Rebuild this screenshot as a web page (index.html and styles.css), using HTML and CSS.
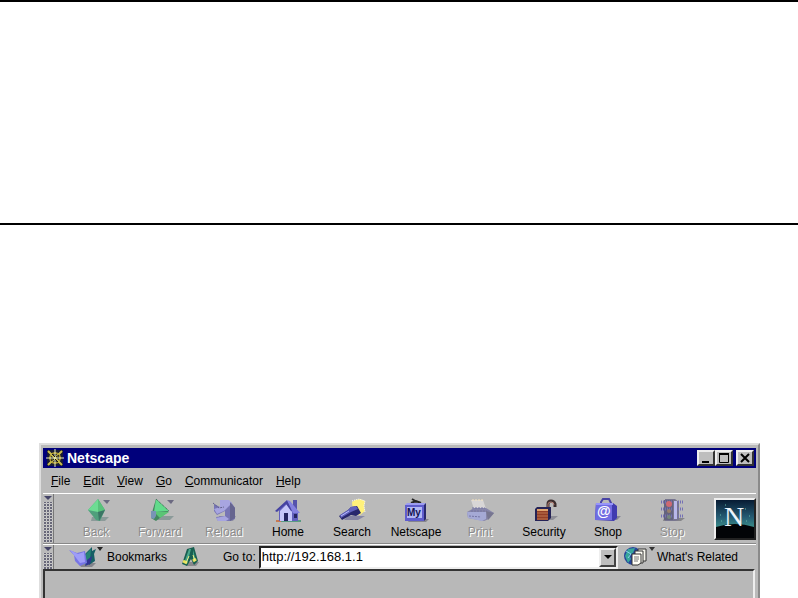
FILE: index.html
```html
<!DOCTYPE html>
<html lang="en">
<head>
    <meta charset="UTF-8">
    <meta name="viewport" content="width=device-width, initial-scale=1.0">
    <title>Netscape</title>
    <link rel="stylesheet" href="styles.css">
</head>
<body>
    <hr>
    <hr class="second">

    <div class="window">
        <div class="titlebar">
            <svg class="app-icon" width="18" height="18" viewBox="0 0 18 18">
                <path d="M1 1h16v16H1z" fill="#171b35"/>
                <circle cx="9" cy="9" r="5" fill="none" stroke="#a3912b" stroke-width="2"/>
                <path d="M2 2l14 14M16 2L2 16" stroke="#c9bd4a" stroke-width="2"/>
                <path d="M9 0v18M0 9h18" stroke="#eef2bd" stroke-width="1"/>
                <path d="M6 5l3 3M12 13l-3-3M5 12l3-2M10 8l3-2" stroke="#111" stroke-width="1"/>
            </svg>
            <span class="title">Netscape</span>
            <div class="controls">
                <button class="ctl" aria-label="Minimize"><svg width="12" height="12"><path d="M2 10h7" stroke="#000" stroke-width="2"/></svg></button>
                <button class="ctl" aria-label="Maximize"><svg width="12" height="12"><path d="M1.500 2v8.500h9V2" fill="none" stroke="#000"/><path d="M1 2h10" stroke="#000" stroke-width="2"/></svg></button>
                <button class="ctl close" aria-label="Close"><svg width="12" height="12"><path d="M2 2l8 8M10 2l-8 8" stroke="#000" stroke-width="2"/></svg></button>
            </div>
        </div>

        <nav class="menu">
            <a href="#"><u>F</u>ile</a>
            <a href="#"><u>E</u>dit</a>
            <a href="#"><u>V</u>iew</a>
            <a href="#"><u>G</u>o</a>
            <a href="#"><u>C</u>ommunicator</a>
            <a href="#"><u>H</u>elp</a>
        </nav>

        <div class="toolbar">
            <div class="grip"></div>
            <div class="tools">
                <button class="tool" disabled>
                    <svg width="36" height="26" viewBox="0 0 36 26">
                        <path d="M14 19h17l-4 4H13z" fill="#8b9a99"/>
                        <path d="M20 1l7 11-5 11-4-1-8-10z" fill="#4f9f7c"/>
                        <path d="M20 1L10 12l10 2z" fill="#6ddc93"/>
                        <path d="M20 1l7 11-7 2z" fill="#58c37b"/>
                        <path d="M20 14l7-2-6 11z" fill="#3b7565"/>
                        <path d="M25 2h7l-3 4z" fill="#6b6981"/>
                    </svg>
                    Back
                </button>
                <button class="tool" disabled>
                    <svg width="36" height="26" viewBox="0 0 36 26">
                        <path d="M18 18h14l-4 4H15z" fill="#8b9a99"/>
                        <path d="M14 1l13 12-13 10-5-3 2-9z" fill="#43875f"/>
                        <path d="M14 1l13 12-15 1z" fill="#62db8b"/>
                        <path d="M12 14h15l-9 6z" fill="#5ac575"/>
                        <path d="M9 13h5v5l-2 3-3-1z" fill="#7894b5"/>
                        <path d="M14 1l13 12" stroke="#3d6352" stroke-dasharray="1 1"/>
                        <path d="M25 2h7l-3 4z" fill="#6b6981"/>
                    </svg>
                    Forward
                </button>
                <button class="tool" disabled>
                    <svg width="36" height="26" viewBox="0 0 36 26">
                        <path d="M13 18h17l-3 5H13z" fill="#9191a0"/>
                        <path d="M8 6l6 3 5-6 6 1 4 6v11l-5 2H12l-2-4 9-1v-5l-8 4-3-4z" fill="#7775b4"/>
                        <path d="M14 2h9l3 3-8 8-7 3-3-5 6-2z" fill="#a7a5e0"/>
                        <path d="M24 4l5 6v10l-5 3z" fill="#66658f"/>
                        <path d="M10 20l9-2 4 3-3 2h-8z" fill="#a7a5e0"/>
                        <path d="M7 5l6 5 5-1" fill="none" stroke="#63618c" stroke-dasharray="2 1"/>
                    </svg>
                    Reload
                </button>
                <button class="tool">
                    <svg width="36" height="26" viewBox="0 0 36 26">
                        <path d="M7 22h24v2H6z" fill="#5a9b83"/>
                        <path d="M6 22h5v2H6z" fill="#c67952"/>
                        <path d="M23 2h4v10h-4z" fill="#5553ac"/>
                        <path d="M9 12l8-8 11 9v10H9z" fill="#6260bd"/>
                        <path d="M10 13l7-7 5 8v9H10z" fill="#c5c6fa"/>
                        <path d="M5 13L17 2l6 10-2 1-5-7-9 8z" fill="#4542a2"/>
                        <path d="M17 2l3 1 10 12h-7z" fill="#8582e0"/>
                        <path d="M14 15h4v8h-4zM24 16h3v4h-3z" fill="#252562"/>
                    </svg>
                    Home
                </button>
                <button class="tool">
                    <svg width="36" height="26" viewBox="0 0 36 26">
                        <path d="M14 18h17l-7 4H10z" fill="#8585a4"/>
                        <path d="M18 4l3-2 5-1 5 2-1 5 1 5-5 4-7-2z" fill="#fff17a"/>
                        <path d="M18 3l3-1 4-1 6 2-1 5 1 6" fill="none" stroke="#fff" stroke-dasharray="1 1"/>
                        <path d="M17 9l6-1 4 7-5 3-5-1-9 5-3-4 9-6z" fill="#27276d"/>
                        <path d="M17 9l5-1 2 3-7 3-10 6-1-3 8-5z" fill="#6062bd"/>
                        <path d="M7 18l8-5" stroke="#babcff"/>
                    </svg>
                    Search
                </button>
                <button class="tool">
                    <svg width="36" height="26" viewBox="0 0 36 26">
                        <path d="M12 21h19l-3 3H10z" fill="#85858e"/>
                        <path d="M13 5l5-2 5 2M14 1l5 3" fill="none" stroke="#252525" stroke-width="2"/>
                        <path d="M7 7l2-2h19l-2 2z" fill="#9c9cf1"/>
                        <path d="M26 7l2-2v16l-2 2z" fill="#29296f"/>
                        <path d="M7 7h19v16H7z" fill="#5f5dcd"/>
                        <path d="M9 9h15v11H9z" fill="#b2b7f4"/>
                        <text x="9" y="18">My</text>
                    </svg>
                    Netscape
                </button>
                <button class="tool" disabled>
                    <svg width="36" height="26" viewBox="0 0 36 26">
                        <path d="M9 2h12l3 9H12z" fill="#d8d6d6"/>
                        <path d="M10 2h12" stroke="#f6e4bd" stroke-dasharray="2 1"/>
                        <path d="M5 14l7-4h12l8 5-5 6-5 2-16-3z" fill="#8786a9"/>
                        <path d="M5 14h19v7l-4 2-14-3z" fill="#a5a9d5"/>
                        <path d="M10 10h13M9 13h16M7 18l12 1" stroke="#7575a4" stroke-dasharray="2 1"/>
                        <path d="M24 13l8 2-6 7z" fill="#777690"/>
                    </svg>
                    Print
                </button>
                <button class="tool">
                    <svg width="36" height="26" viewBox="0 0 36 26">
                        <path d="M18 18h14l-5 4H14z" fill="#8e8e96"/>
                        <path d="M22 12V6q0-3 3-3t4 3v3" fill="none" stroke="#3c2d2d" stroke-width="3"/>
                        <path d="M22 11V6q0-2 3-2t3 3" fill="none" stroke="#b78378" stroke-width="1"/>
                        <path d="M9 11l2-2h14v11l-3 3H9z" fill="#252356"/>
                        <path d="M11 12h11v10H11z" fill="#933e26"/>
                        <path d="M11 15h11M11 18h11M11 21h11" stroke="#bd7650"/>
                        <path d="M11 12h11" stroke="#e0a56f" stroke-width="2"/>
                    </svg>
                    Security
                </button>
                <button class="tool">
                    <svg width="36" height="26" viewBox="0 0 36 26">
                        <path d="M14 18h17l-4 4H13z" fill="#858593"/>
                        <path d="M11 7V4l2-3h6l3 6" fill="none" stroke="#4944a5" stroke-width="2"/>
                        <path d="M6 5h17l4 3v12l-3 3-19-1z" fill="#403bb0"/>
                        <path d="M6 5h16v17H5z" fill="#706ce2"/>
                        <path d="M6 6h17" stroke="#9694fa" stroke-width="2"/>
                        <text class="at" x="7" y="18">@</text>
                    </svg>
                    Shop
                </button>
                <button class="tool" disabled>
                    <svg width="36" height="26" viewBox="0 0 36 26">
                        <path d="M10 20h21l-4 3H9z" fill="#858589"/>
                        <path d="M11 1h10l4 3v18l-4 1H11z" fill="#77758f"/>
                        <path d="M10 2h9v20h-9z" fill="#64637e"/>
                        <path d="M20 3h3v18h-3z" fill="#b9b8ea"/>
                        <path d="M7 4h12M7 11h12M7 18h12M24 4h5M24 11h5M24 18h5" stroke="#7470b5" stroke-width="3" stroke-dasharray="1 1"/>
                        <circle cx="15" cy="6" r="3" fill="#ce6972"/>
                        <circle cx="15" cy="13" r="2" fill="#98806c"/>
                        <circle cx="15" cy="19" r="2" fill="#75877b"/>
                    </svg>
                    Stop
                </button>
            </div>
            <a class="logo" href="#" aria-label="Netscape home">
                <svg width="38" height="38" viewBox="0 0 38 38">
                    <defs>
                        <linearGradient id="sky" x2="0" y2="1">
                            <stop offset="0" stop-color="#071b33"/>
                            <stop offset=".45" stop-color="#255b73"/>
                            <stop offset=".7" stop-color="#398987"/>
                        </linearGradient>
                    </defs>
                    <path d="M0 0h38v38H0z" fill="url(#sky)"/>
                    <path d="M4 15h1M9 5h1M29 9h1M33 16h1M5 21h1M30 21h1" stroke="#63bba9"/>
                    <path d="M0 27q19-6 38 0v11H0z" fill="#020407"/>
                    <text class="n" x="8" y="26">N</text>
                </svg>
            </a>
        </div>

        <div class="location">
            <div class="grip"></div>
            <button class="bookmarks">
                <svg width="36" height="22" viewBox="0 0 36 22">
                    <path d="M10 17h18l-4 4H13z" fill="#84848c"/>
                    <path d="M16 9l8-8v4l4-2-2 5 1 7-6 4z" fill="#155f65"/>
                    <path d="M17 9l6-6-1 11-5 5z" fill="#258475"/>
                    <path d="M19 14l5-4-2 8-5 2z" fill="#303392"/>
                    <path d="M1 4l8 3 8-2 2 12-7 3-5-5-1-6z" fill="#7775e4"/>
                    <path d="M2 4l8 4 6-2 1 10-5 1z" fill="#9e9df8"/>
                    <path d="M29 1h6l-3 4z" fill="#252525"/>
                </svg>
                Bookmarks
            </button>
            <svg class="quickfile" width="18" height="20" viewBox="0 0 18 20">
                <path d="M6 15h12l-3 4H5z" fill="#88888b"/>
                <path d="M6 2l7-2 4 14-4 4-3-6-4 7-5-2z" fill="#185f50"/>
                <path d="M8 2h2L6 17l-3-1zM12 3l3 11-3-2z" fill="#49a78b"/>
                <path d="M2 14l4 2M12 14l3-2" stroke="#eae35c" stroke-width="3"/>
                <path d="M8 9l-3 7M12 8l2 6" stroke="#f1ed83"/>
            </svg>
            <label for="url">Go to:</label>
            <div class="combo">
                <input type="text" id="url" value="http://192.168.1.1">
                <button aria-label="Show addresses"><svg width="10" height="6"><path d="M1 1h8L5 5z"/></svg></button>
            </div>
            <button class="related">
                <svg width="33" height="22" viewBox="0 0 33 22">
                    <circle cx="10" cy="10" r="9" fill="#27459b"/>
                    <path d="M5 3l7-1-2 5-4 2 2 4-3 4-3-7z" fill="#37a69a"/>
                    <path d="M3 5l5 3-3 4" fill="none" stroke="#8cd4ed"/>
                    <path d="M15 3h8v12h-8z" fill="#f7f6ed" stroke="#333"/>
                    <path d="M12 5h8v12h-8z" fill="#fffef5" stroke="#333"/>
                    <path d="M9 8h9v9l-3 2H9z" fill="#fffef5" stroke="#333"/>
                    <path d="M11 11h5M11 13h5M11 15h4" stroke="#777"/>
                    <path d="M26 1h6l-3 4z" fill="#333"/>
                </svg>
                What's Related
            </button>
        </div>

        <main class="page"></main>
    </div>
</body>
</html>
```
FILE: styles.css
```css
* {
    box-sizing: border-box;
}

body {
    margin: 0;
    min-height: 100vh;
    display: flex;
    flex-direction: column;
    background: #fff;
    color: #000;
    font-family: "Liberation Sans", Arial, sans-serif;
    font-size: 12px;
}

hr {
    width: 100%;
    height: 2px;
    margin: 0;
    border: none;
    background: #000;
    flex-shrink: 0;
}

hr.second {
    margin: 221px 0 218px;
}

button {
    padding: 0;
    border: none;
    background: none;
    color: inherit;
    font: inherit;
}

a {
    color: inherit;
    text-decoration: none;
}

svg {
    display: block;
    flex-shrink: 0;
}

.window {
    flex: 1;
    display: flex;
    flex-direction: column;
    margin: 0 38px 0 39px;
    padding: 3px 2px 0;
    border: 2px solid #dedede;
    border-right-color: #8a8a8a;
    border-bottom: none;
    background: #bababa;
}

.titlebar {
    display: flex;
    align-items: center;
    height: 20px;
    padding: 0 2px 0 3px;
    background: #00007b;
    color: #fff;
}

.title {
    margin-left: 3px;
    font-size: 14px;
    font-weight: bold;
}

.controls {
    display: flex;
    margin-left: auto;
}

.ctl {
    display: flex;
    align-items: center;
    justify-content: center;
    width: 18px;
    height: 16px;
    border: 2px solid;
    border-color: #eee #333 #333 #eee;
    background: #bebebe;
}

.close {
    margin-left: 3px;
}

.menu {
    display: flex;
    align-items: center;
    gap: 13px;
    height: 25px;
    padding-left: 8px;
}

.toolbar,
.location {
    display: flex;
    border-top: 1px solid #fff;
    border-bottom: 1px solid #888;
}

.toolbar {
    height: 51px;
}

.grip {
    width: 11px;
    flex-shrink: 0;
    border-right: 1px solid #777;
    background:
        linear-gradient(#bababa, #bababa) 0 0 / 100% 8px no-repeat,
        radial-gradient(circle at 1px 1px, #686879 1px, #dedede 1px, transparent 2px) 1px 1px / 3px 3px;
}

.grip::before {
    content: "";
    display: block;
    width: 0;
    margin: 2px 0 0 1px;
    border: 4px solid transparent;
    border-top-color: #444467;
    border-bottom: none;
}

.tools {
    display: flex;
    flex: 1;
    max-width: 640px;
    margin-left: 10px;
}

.tool {
    display: flex;
    flex: 1;
    flex-direction: column;
    align-items: center;
    padding-top: 4px;
    line-height: 16px;
}

.tool:disabled {
    color: #8c8c8c;
    text-shadow: 1px 1px #fff;
}

.tool text {
    font-size: 10px;
    font-weight: bold;
    fill: #111152;
}

.tool .at {
    font-size: 14px;
    fill: #fff;
}

.logo {
    align-self: center;
    margin-left: auto;
    border: 2px solid;
    border-color: #eee #222 #222 #eee;
}

.logo .n {
    font-family: "Liberation Serif", serif;
    font-size: 28px;
    fill: #edf4fc;
}

.location {
    height: 25px;
    align-items: center;
    border-bottom: none;
}

.location .grip {
    align-self: stretch;
}

.bookmarks,
.related {
    display: flex;
    align-items: center;
    white-space: nowrap;
}

.bookmarks {
    gap: 3px;
    margin-left: 14px;
}

.quickfile {
    margin-left: 14px;
}

.location label {
    margin: 0 3px 0 24px;
}

.combo {
    display: flex;
    flex: 1;
    min-width: 0;
    height: 23px;
    border: 2px solid;
    border-color: #222 #eee #eee #222;
    background: #fff;
}

.combo input {
    flex: 1;
    min-width: 0;
    padding: 0 1px 2px;
    border: none;
    outline: none;
    background: none;
    font: inherit;
    font-size: 13px;
}

.combo button {
    display: flex;
    align-items: center;
    justify-content: center;
    width: 17px;
    border: 2px solid;
    border-color: #eee #444 #444 #eee;
    background: #bebebe;
}

.related {
    gap: 1px;
    margin: 0 18px 0 5px;
}

.page {
    flex: 1;
    margin-right: 1px;
    border: 2px solid #333;
    border-right-color: #eee;
    border-bottom: none;
    background: #b8b8b8;
}
```
